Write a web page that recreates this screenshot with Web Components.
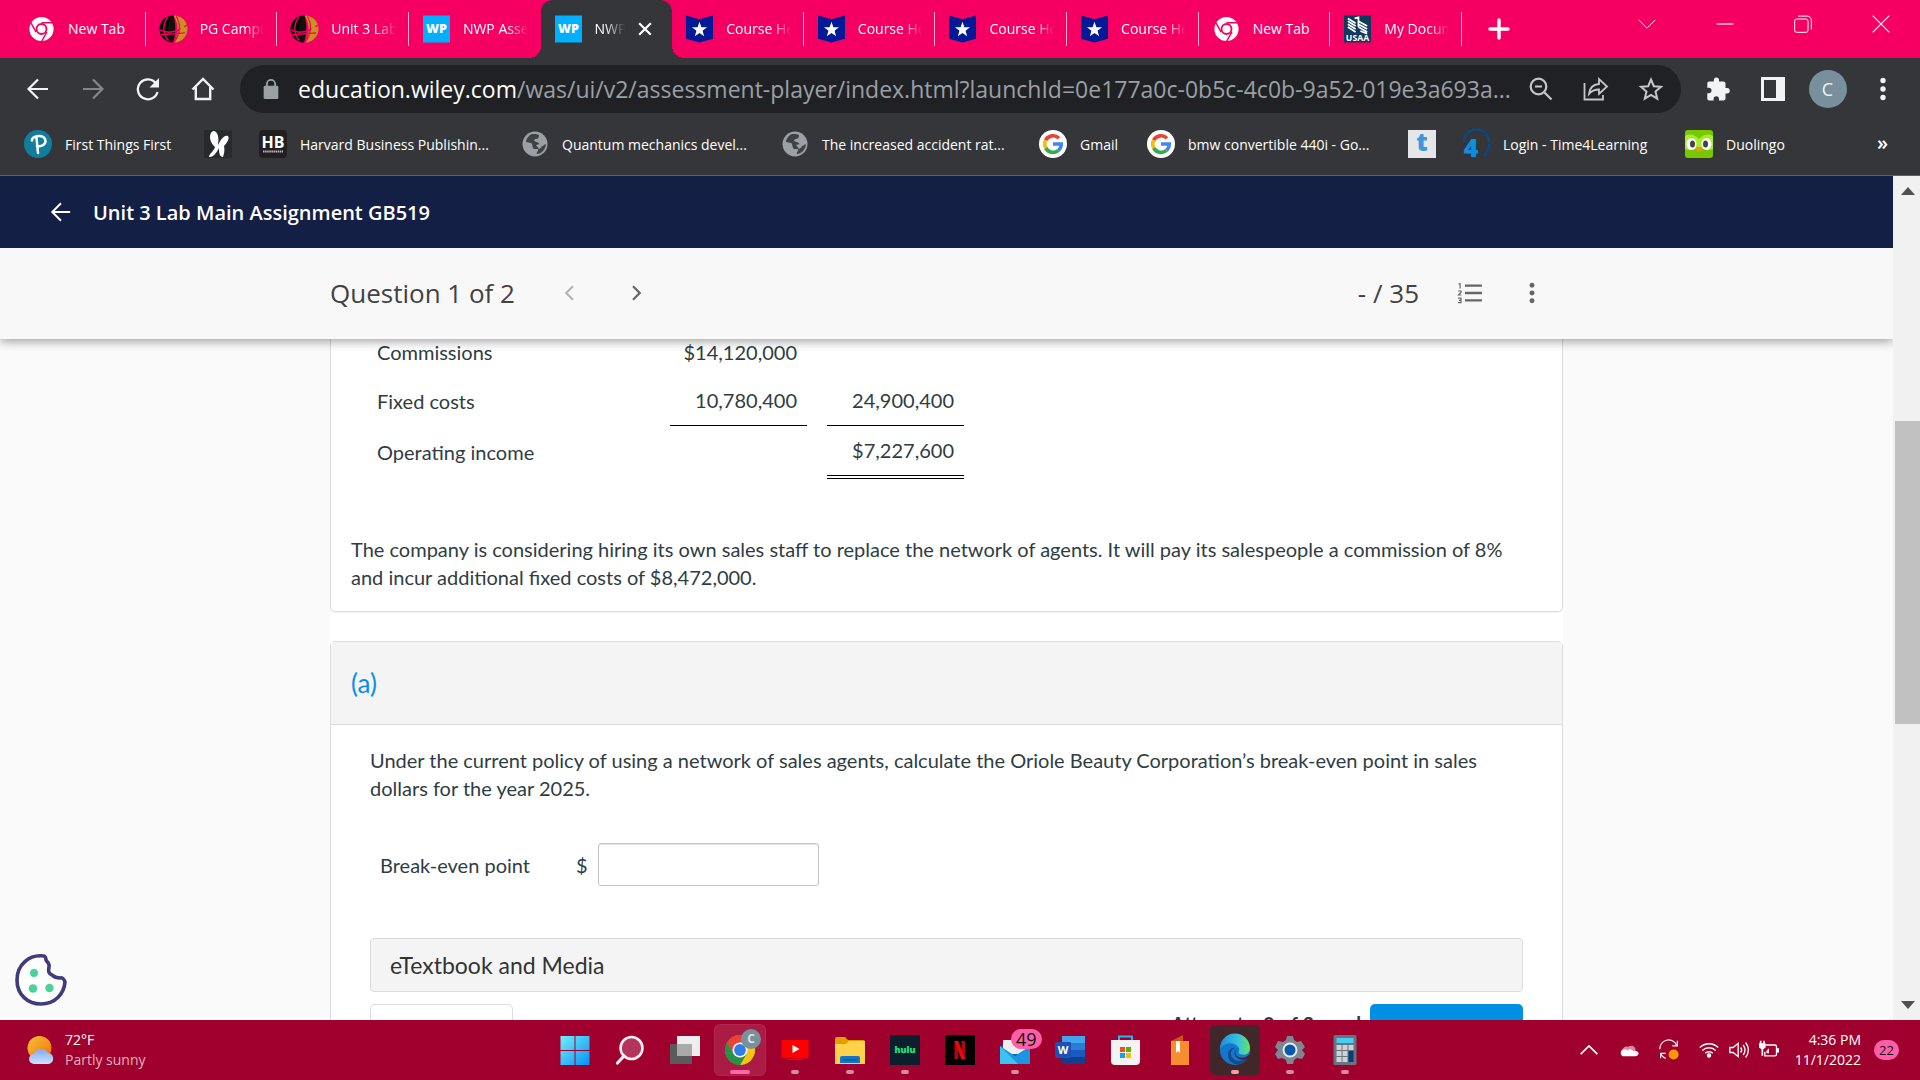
<!DOCTYPE html>
<html lang="en">
<head>
<meta charset="utf-8">
<title>Unit 3 Lab Main Assignment GB519</title>
<style>
  body {
    margin: 0;
    height: 100vh;
    display: flex;
    flex-direction: column;
    overflow: hidden;
    background: #fafafa;
    font-family: "Open Sans", "Noto Sans", sans-serif;
  }
</style>
</head>
<body>
<tab-strip>
  <browser-tab icon="chromeMono">New Tab</browser-tab>
  <browser-tab icon="globeGold">PG Campus</browser-tab>
  <browser-tab icon="globeGold">Unit 3 Lab</browser-tab>
  <browser-tab icon="wp">NWP Assess</browser-tab>
  <browser-tab icon="wp" active>NWP</browser-tab>
  <browser-tab icon="shield">Course Hero</browser-tab>
  <browser-tab icon="shield">Course Hero</browser-tab>
  <browser-tab icon="shield">Course Hero</browser-tab>
  <browser-tab icon="shield">Course Hero</browser-tab>
  <browser-tab icon="chromeMono">New Tab</browser-tab>
  <browser-tab icon="usaa">My Docum</browser-tab>
</tab-strip>
<address-bar></address-bar>
<bookmarks-bar>
  <bookmark-link icon="pearson">First Things First</bookmark-link>
  <bookmark-link icon="butterfly"></bookmark-link>
  <bookmark-link icon="hb">Harvard Business Publishin...</bookmark-link>
  <bookmark-link icon="globe">Quantum mechanics devel...</bookmark-link>
  <bookmark-link icon="globe">The increased accident rat...</bookmark-link>
  <bookmark-link icon="google">Gmail</bookmark-link>
  <bookmark-link icon="google">bmw convertible 440i - Go...</bookmark-link>
  <bookmark-link icon="tLogo"></bookmark-link>
  <bookmark-link icon="four">Login - Time4Learning</bookmark-link>
  <bookmark-link icon="duo">Duolingo</bookmark-link>
</bookmarks-bar>
<page-view>
  <assignment-title slot="top">Unit 3 Lab Main Assignment GB519</assignment-title>
  <question-nav slot="top">Question 1 of 2</question-nav>
  <question-card>
    <income-table></income-table>
    The company is considering hiring its own sales staff to replace the network of agents. It will pay its salespeople a commission of 8% and incur additional fixed costs of $8,472,000.
  </question-card>
  <part-card heading="(a)">
    <span slot="prompt">Under the current policy of using a network of sales agents, calculate the Oriole Beauty Corporation’s break-even point in sales dollars for the year 2025.</span>
    <money-field label="Break-even point"></money-field>
  </part-card>
  <cookie-button slot="overlay"></cookie-button>
</page-view>
<task-bar></task-bar>

<script>
"use strict";

const ICONS = {
  back: `<svg viewBox="0 0 24 24" fill="none" stroke="currentColor" stroke-width="2.200"><path d="M22 12H3M12 2.500L2.500 12L12 21.500"/></svg>`,
  forward: `<svg viewBox="0 0 24 24" fill="none" stroke="currentColor" stroke-width="2.200"><path d="M2 12h19M12 2.500L21.500 12L12 21.500"/></svg>`,
  reload: `<svg viewBox="0 0 24 24"><path d="M20 6.500A10 10 0 1 0 21.500 15" fill="none" stroke="currentColor" stroke-width="2.300"/><path d="M23 1v9.500h-9.500z" fill="currentColor"/></svg>`,
  home: `<svg viewBox="0 0 24 24" fill="none" stroke="currentColor" stroke-width="2.400"><path d="M1.500 12.500L12 2l10.500 10.500M4.800 10v12h14.400V10"/></svg>`,
  lock: `<svg viewBox="0 0 24 24"><path d="M7.500 9V6.500a4.500 4.500 0 0 1 9 0V9" fill="none" stroke="currentColor" stroke-width="2"/><rect x="4" y="8.500" width="16" height="14.500" rx="1.500" fill="currentColor"/></svg>`,
  zoomOut: `<svg viewBox="0 0 24 24" fill="none" stroke="currentColor" stroke-width="2.200"><circle cx="9.500" cy="9.500" r="7.800"/><path d="M15.500 15.500L22.500 22.500M6 9.500h7"/></svg>`,
  share: `<svg viewBox="0 0 24 24" fill="none" stroke="currentColor" stroke-width="1.800"><path d="M.5 6v16.500H19V18"/><path d="M5 17c.5-6 4-9.500 10-10V2l8 7.500-8 7.500V12.500c-4 0-7.500 1.500-10 4.500z"/></svg>`,
  star: `<svg viewBox="0 0 24 24" fill="none" stroke="currentColor" stroke-width="2"><path d="M12 2.500l2.800 6.700 7.200.6-5.500 4.700 1.700 7.100-6.200-3.800-6.200 3.800 1.700-7.100L2 9.800l7.200-.6z"/></svg>`,
  puzzle: `<svg viewBox="0 0 24 24" fill="currentColor"><path d="M21 11H19.500V6.500c0-1.100-.9-2-2-2h-4.500V3a2.600 2.600 0 0 0-5.200 0v1.500H3.300c-1.100 0-2 .9-2 2v4.300h1.500a2.700 2.700 0 0 1 0 5.400H1.300V21.500c0 1.100.9 2 2 2h4.300V22a2.700 2.700 0 0 1 5.400 0v1.500h4.500c1.100 0 2-.9 2-2v-5H21a2.700 2.700 0 0 0 0-5.500z"/></svg>`,
  sidePanel: `<svg viewBox="0 0 24 24"><path fill="currentColor" fill-rule="evenodd" d="M0 0h24v24H0zM3 3v18h12V3z"/></svg>`,
  dots: `<svg viewBox="0 0 24 24" fill="currentColor"><circle cx="12" cy="3.500" r="2.700"/><circle cx="12" cy="12" r="2.700"/><circle cx="12" cy="20.500" r="2.700"/></svg>`,
  close: `<svg viewBox="0 0 24 24" fill="none" stroke="currentColor" stroke-width="3.800"><path d="M2 2l20 20M22 2L2 22"/></svg>`,
  plus: `<svg viewBox="0 0 24 24" fill="none" stroke="currentColor" stroke-width="3.400" stroke-linecap="round"><path d="M12 3v18M3 12h18"/></svg>`,
  down: `<svg viewBox="0 0 24 24" fill="none" stroke="currentColor" stroke-width="1.200"><path d="M2 7l10 10L22 7"/></svg>`,
  up: `<svg viewBox="0 0 24 24" fill="none" stroke="currentColor" stroke-width="2"><path d="M2 17L12 7l10 10"/></svg>`,
  minimise: `<svg viewBox="0 0 24 24" fill="none" stroke="currentColor" stroke-width="1.400"><path d="M2 12h20"/></svg>`,
  restore: `<svg viewBox="0 0 24 24" fill="none" stroke="currentColor" stroke-width="1.200"><rect x="2" y="6" width="16" height="16" rx="2.500"/><path d="M6 2.500h11a5 5 0 0 1 5 5v11"/></svg>`,
  winClose: `<svg viewBox="0 0 24 24" fill="none" stroke="currentColor" stroke-width="1.300"><path d="M2 2l20 20M22 2L2 22"/></svg>`,
  chromeMono: `<svg viewBox="0 0 24 24" fill="none" stroke="#fff"><circle cx="12" cy="12" r="8" stroke-width="5.500"/><circle cx="12" cy="12" r="3.600" fill="#fff" stroke="none"/><g stroke="#f50062" stroke-width="1.300"><path d="M12 6.500h10.500M16.800 14.700L11.500 24M7.200 14.700L2 5.500"/></g></svg>`,
  globeGold: `<svg viewBox="0 0 28 28"><path d="M14 0a14 14 0 0 0-1 28C7 20 8 8 14 0z" fill="#050505"/><path d="M14 0a14 14 0 0 1 1 28c4-9 5-19-1-28z" fill="#c8921e"/><path d="M13 0c-6 9-7 19-1 28l2-1c2-9 3-17 0-27z" fill="#15100a"/><path d="M0 15c9 5 18 2 28-5M17 1c5 8 4 18-2 26M8 2c-6 8-5 18 1 24M1 20l25-2" fill="none" stroke="#f50062" stroke-width="1.400"/><path d="M18 2c6 4 8 9 8 14l-5 2c1-6 0-11-3-16z" fill="#c8921e"/></svg>`,
  wp: `<svg viewBox="0 0 28 28"><path fill="#00b0ff" d="M0 0h28v28H0z"/><text x="14" y="18.500" text-anchor="middle" font-size="13" font-weight="800" fill="#fff" font-family="Open Sans">WP</text></svg>`,
  shield: `<svg viewBox="0 0 28 28"><path fill="#031a96" d="M0 0l14 4L28 0v24l-14 4L0 24z"/><path fill="#fff" d="M14 6.500l2 5.600 5.800.1-4.600 3.600 1.600 5.700-4.800-3.400-4.800 3.400 1.600-5.700-4.600-3.600 5.800-.1z"/></svg>`,
  usaa: `<svg viewBox="0 0 28 28"><path fill="#12395b" d="M0 0h28v28H0z"/><path d="M4 3l8 5M4 6l8 5M4 9l8 5M4 12l8 5M11 3l4-1v10M15 6l9 5M15 9l9 5M15 12l9 5M17 16l7 3" fill="none" stroke="#fff" stroke-width="1.800"/><text x="14" y="26.500" text-anchor="middle" font-size="9" font-weight="700" fill="#fff" font-family="Open Sans">USAA</text></svg>`,
  pearson: `<svg viewBox="0 0 28 28"><circle cx="14" cy="14" r="14" fill="#127e9e"/><path d="M8 10.500c-1-4 10-7 13-1.500 2 5-3 8-8 7M12.500 8l1.500 15" fill="none" stroke="#fff" stroke-width="2.500" stroke-linecap="round"/></svg>`,
  butterfly: `<svg viewBox="0 0 28 28"><path fill="#282b2e" d="M0 0h28v28H0z"/><path fill="#fff" d="M7 3c3-4 6-1 7 3 1 5 0 7 0 9 2-4 6-11 10-9 2 2-1 7-4 10 1 4 0 8-1 11-4 0-4-6-4-9-2 4-6 10-10 9 0-3 5-6 6-10C6 13 5 6 7 3z"/></svg>`,
  hb: `<svg viewBox="0 0 28 28"><rect width="28" height="28" rx="4" fill="#231f20"/><text x="14" y="17.500" text-anchor="middle" font-size="16" font-weight="700" fill="#fff" font-family="Open Sans">HB</text><path d="M4 21.500h20" stroke="#bbb" stroke-width="2" stroke-dasharray="1.500 .6"/></svg>`,
  globe: `<svg viewBox="0 0 28 28"><circle cx="14" cy="14" r="12.500" fill="#9aa0a6"/><path fill="#35363a" d="M15 4l3 1c0 3-1 4-4 4l-1 2c2 1 5 1 6 4 1 2 4 1 5-1l1 1c-1 5-5 9-9 9-1-2 2-3 1-5h-4c-2-1-1-5-3-6l-5-1c0-3 3-7 6-8z" opacity=".9"/><path fill="#9aa0a6" d="M15 15l4-1 2 3-3 2z"/></svg>`,
  google: `<svg viewBox="0 0 28 28"><circle cx="14" cy="14" r="14" fill="#fff"/><g fill="none" stroke-width="3.600"><path d="M6.600 10.300A8.400 8.400 0 0 1 20 8.200" stroke="#ea4335"/><path d="M6.700 18a8.400 8.400 0 0 1-.1-7.700" stroke="#fbbc05"/><path d="M19.500 20.300A8.400 8.400 0 0 1 6.700 18" stroke="#34a853"/><path d="M14 14h8.300a8.400 8.400 0 0 1-2.800 6.300" stroke="#4285f4"/></g></svg>`,
  tLogo: `<svg viewBox="0 0 28 28"><path fill="#e4e6e8" d="M0 0h28v28H0z"/><text x="14" y="21" text-anchor="middle" font-size="25" font-weight="800" fill="#3d97d8" font-family="Open Sans">t</text></svg>`,
  four: `<svg viewBox="0 0 28 28"><path d="M2 12A12 12 0 0 1 27 12q1 8-5 14" fill="none" stroke="#064a86" stroke-width="2.600" stroke-dasharray="9 1"/><text x="9" y="27" text-anchor="middle" font-size="25" font-weight="800" fill="#0c8fe0" font-family="Open Sans">4</text></svg>`,
  duo: `<svg viewBox="0 0 28 28"><rect width="28" height="28" rx="3" fill="#78c800"/><path d="M0 6q7-4 14 3 7-7 14-3v13q-7 3-14-2-7 5-14 2z" fill="#a5ed2e"/><ellipse cx="6.500" cy="14" rx="5" ry="6" fill="#fff"/><ellipse cx="21.500" cy="14" rx="5" ry="6" fill="#fff"/><ellipse cx="7.500" cy="14" rx="2.500" ry="3.500" fill="#444"/><ellipse cx="20.500" cy="14" rx="2.500" ry="3.500" fill="#444"/><path d="M11 17h6l-1 4q-2 2-4 0z" fill="#f7941d"/></svg>`,
  prev: `<svg viewBox="0 0 24 24" fill="none" stroke="currentColor" stroke-width="3"><path d="M16 3l-9 9 9 9"/></svg>`,
  next: `<svg viewBox="0 0 24 24" fill="none" stroke="currentColor" stroke-width="3"><path d="M8 3l9 9-9 9"/></svg>`,
  list: `<svg viewBox="0 0 28 24" fill="none" stroke="currentColor"><path stroke-width="2.600" d="M8.500 4H27M8.500 12H27M8.500 20H27"/><path stroke-width="1.300" d="M1.500 2h1.700v5M1 9.800h3.300v1.300L1.500 14.200h3M1 17.600h3.200v5H1M2 20h2"/></svg>`,
  triUp: `<svg viewBox="0 0 14 8"><path fill="#505050" d="M7 0l7 8H0z"/></svg>`,
  triDown: `<svg viewBox="0 0 14 8"><path fill="#505050" d="M7 8l7-8H0z"/></svg>`,
  cookie: `<svg viewBox="0 0 52 52"><path d="M29 2C14 0 2 11 2 26s11 24 24 24c14 0 23-10 24-22-1-3-3-5-5-4-4 0-6-1-8-3-3-1-4-4-3-8 1-4-2-5-3-7 0-2-1-4-2-4z" fill="#fff" stroke="#3f3b7d" stroke-width="3.600" stroke-linejoin="round"/><g fill="#49d39b"><circle cx="19" cy="19" r="4"/><circle cx="18" cy="34.500" r="4.300"/><circle cx="34.500" cy="34" r="4.200"/></g></svg>`,
  weather: `<svg viewBox="0 0 30 30"><defs><linearGradient id="s" x1="0" y1="0" x2="1" y2="1"><stop stop-color="#f4c430"/><stop offset="1" stop-color="#f26b12"/></linearGradient><linearGradient id="c" x1="0" y1="0" x2="0" y2="1"><stop stop-color="#7eaaf0"/><stop offset="1" stop-color="#cfe2fb"/></linearGradient></defs><circle cx="13.500" cy="13" r="12" fill="url(#s)"/><path d="M8 29a5 5 0 0 1 0-10 7.500 7 0 0 1 14-1 5.600 5.600 0 0 1 1 11z" fill="url(#c)"/></svg>`,
  windows: `<svg viewBox="0 0 30 30"><defs><linearGradient id="w" x1="0" y1="0" x2="1" y2="1"><stop stop-color="#74eefb"/><stop offset="1" stop-color="#0791f5"/></linearGradient></defs><path fill="url(#w)" d="M.5 1h14v14h-14zM15.500 1h14v14h-14zM.5 16h14v14h-14zM15.500 16h14v14h-14z"/></svg>`,
  search: `<svg viewBox="0 0 30 30"><circle cx="16.500" cy="13" r="11" fill="#b5355a" stroke="#eee" stroke-width="2.600"/><path d="M9 21l-6.500 7" stroke="#eee" stroke-width="3.200" stroke-linecap="round"/></svg>`,
  taskView: `<svg viewBox="0 0 30 30"><path fill="#5b5b5b" d="M0 9h22v20H0z"/><path fill="#eee" d="M7 1h23v20H7z"/><path fill="#aaa" d="M7 9h15v12H7z"/></svg>`,
  chrome: `<svg viewBox="0 0 30 30"><circle cx="15" cy="15" r="15" fill="#34a853"/><path fill="#ea4335" d="M2 7.500a15 15 0 0 1 26 0H15l-6.500 11z"/><path fill="#fbc116" d="M28 7.500A15 15 0 0 1 15 30l6.500-11.200L15 7.500z"/><path fill="#2a9247" d="M2 7.500A15 15 0 0 0 15 30l6.500-11H8.500z"/><circle cx="15" cy="15" r="7.500" fill="#fff"/><circle cx="15" cy="15" r="5.900" fill="#2f7de9"/></svg>`,
  youtube: `<svg viewBox="0 0 30 30"><rect x="1.500" y="5" width="27" height="18" rx="1" fill="#f00"/><path fill="#f00" d="M7 23.500h16V25H7z"/><path fill="#fff" d="M12.500 10l7 4-7 4z"/></svg>`,
  folder: `<svg viewBox="0 0 30 30"><path fill="#e0a000" d="M0 4q0-2 2-2h8l3 3h15q2 0 2 2v5H0z"/><path fill="#ffd24a" d="M0 9h11l3-3h16v23H0z"/><path fill="#1275c6" d="M5 28v-5q0-2 2-2h16q2 0 2 2v5z"/><path d="M8 25h14" stroke="#07508f"/></svg>`,
  hulu: `<svg viewBox="0 0 30 30"><path fill="#0b1f2c" d="M0 0h30v30H0z"/><text x="15" y="18" text-anchor="middle" font-size="9" font-weight="800" fill="#1ce783" font-family="Open Sans">hulu</text></svg>`,
  netflix: `<svg viewBox="0 0 30 30"><path d="M0 0h30v30H0z"/><path fill="#b1060f" d="M9.500 6h3.700v18l-3.700.5zM16.500 6h3.700v18.500l-3.700-.5z"/><path fill="#e50914" d="M9.500 6h3.700l7 18.500-3.900-.5z"/></svg>`,
  mail: `<svg viewBox="0 0 30 30"><path fill="#0a5fb0" d="M0 12L15 2l15 10v17H0z"/><path fill="#eee" d="M3 5h24v14H3z"/><path fill="#1b95e0" d="M0 11l15 10L30 11v18H0z"/><path fill="#3cc3f2" d="M0 11l18 18H0z"/></svg>`,
  word: `<svg viewBox="0 0 30 30"><path fill="#41a5ee" d="M7 1h23v8H7z"/><path fill="#2b7cd3" d="M7 8h23v8H7z"/><path fill="#185abd" d="M7 15h23v8H7z"/><path fill="#103f91" d="M7 22h23v7H7z"/><rect y="7" width="16" height="16" rx="1" fill="#1c52b5"/><text x="8" y="19" text-anchor="middle" font-size="11" font-weight="700" fill="#fff" font-family="Open Sans">W</text></svg>`,
  store: `<svg viewBox="0 0 30 30"><path d="M9 6V1.500h13V6" fill="none" stroke="#28b5f0" stroke-width="2"/><path fill="#f3f3f3" d="M1 5h29v21q0 4-4 4H5q-4 0-4-4z"/><path fill="#f25022" d="M10 12h5v5h-5z"/><path fill="#59b300" d="M16 12h5v5h-5z"/><path fill="#08a4ef" d="M10 18h5v5h-5z"/><path fill="#ffb900" d="M16 18h5v5h-5z"/></svg>`,
  book: `<svg viewBox="0 0 30 30"><path fill="#d4500f" d="M6 6l12-6v6z"/><path fill="#f68d2e" d="M6 6h18v24H6z"/><path fill="#fff" d="M11 6h4v12l-2-2-2 2z"/></svg>`,
  edge: `<svg viewBox="0 0 30 30"><defs><linearGradient id="e" x1="0" y1="0" x2="1" y2="0"><stop stop-color="#1c8fdd"/><stop offset=".6" stop-color="#35c1e0"/><stop offset="1" stop-color="#68e35a"/></linearGradient></defs><circle cx="15" cy="15" r="15" fill="#1477cf"/><path fill="url(#e)" d="M0 14A15 15 0 0 1 30 13c0 6-5 8-10 6-3-1 0-2-1-6C15 6 4 7 0 14z"/><path fill="#114a92" d="M15 13c-6 2-5 9 0 12 5 2 9 0 13-2-7 10-21 7-20-4 1-5 4-7 7-6z"/><path fill="#42272a" d="M17 14c-3 1-2 6 1 8 5 2 9 0 12-3v2l-3 3c-5 2-10 0-12-4-1-3 0-6 2-6z"/></svg>`,
  gear: `<svg viewBox="0 0 30 30"><path fill="#7d8790" d="M12 1h6l1 4 3 2 4-1 4 6-3 3 3 4-3 5-5-1-3 2-1 4h-6l-1-4-4-2-4 1-3-5 3-4-3-3 3-6 5 1 3-2z"/><circle cx="15" cy="15" r="7.500" fill="#e7eaec"/><circle cx="15" cy="15" r="5.500" fill="#075aa8"/></svg>`,
  calc: `<svg viewBox="0 0 30 30"><rect x="3.500" y="0" width="23" height="30" rx="1.500" fill="#69757e"/><path fill="#46cff3" d="M6.500 3h17v5h-17z"/><path fill="#ccd2d8" d="M6.500 10h5v5h-5zM12.500 10h5v5h-5zM18.500 10h5v5h-5zM6.500 16h5v5h-5zM12.500 16h5v5h-5zM6.500 22h5v5h-5zM12.500 22h5v5h-5z"/><path fill="#0a3c79" d="M18.500 16h5v11h-5z"/></svg>`,
  cloud: `<svg viewBox="0 0 24 24"><path fill="#d98ba3" d="M4 12a6 6 0 0 1 7-4c5-3 9 0 9 5L12 18z"/><path fill="#fff" d="M4.500 19.500a4.500 4.500 0 0 1 0-8q3-1 6 1 3-3 7 1 6-1 6 3-1 3-4 3z"/></svg>`,
  sync: `<svg viewBox="0 0 24 24"><g fill="none" stroke="#fff" stroke-width="1.400"><path d="M1 11A10.500 10.500 0 0 1 21 6M22 1v6h-6M8 22a10 10 0 0 1-6-6M2 22v-6h6"/></g><circle cx="17.500" cy="17.500" r="6" fill="#ff9800"/></svg>`,
  wifi: `<svg viewBox="0 0 24 24" fill="none" stroke="#fff" stroke-width="1.700"><path d="M1 9a15.500 15.500 0 0 1 22 0M4 12.500a11.500 11.500 0 0 1 16 0M7.500 16a6.500 6.500 0 0 1 9 0"/><circle cx="12" cy="18.500" r="1.800" fill="#fff"/></svg>`,
  volume: `<svg viewBox="0 0 24 24" fill="none" stroke="#fff" stroke-width="1.600"><path d="M1 9h4l6-5v16l-6-5H1zM14 9q2.500 3 0 6M17 6q4.500 6 0 12M20 3q6.500 9 0 18"/></svg>`,
  battery: `<svg viewBox="0 0 24 24"><path d="M8 6h11a2 2 0 0 1 2 2v9a2 2 0 0 1-2 2H7v-5" fill="none" stroke="#fff" stroke-width="1.600"/><path fill="#fff" d="M21.500 10H24v5h-2.500zM9 13l3-3v6H9zM0 4h8v5l-3 2v8H3v-8L0 9zM1 1h2v4H1zM5 1h2v4H5z"/></svg>`
};

// Shared by every element: opens a shadow root and fills it from a template.
function render(host, html) {
  const template = document.createElement("template");
  template.innerHTML = html;
  host.attachShadow({mode: "open"}).appendChild(template.content.cloneNode(true));
}

const BUTTON = `
  button {
    display: flex;
    align-items: center;
    justify-content: center;
    padding: 0;
    border: 0;
    background: none;
    color: inherit;
    font: inherit;
  }
`;

customElements.define("ui-icon", class extends HTMLElement {
  constructor() {
    super();
    render(this, `
      <style>
        :host { display: block; flex: none; width: 24px; height: 24px; }
        svg { display: block; width: 100%; height: 100%; overflow: visible; }
      </style>
    `);
  }
  connectedCallback() {
    if (this.shadowRoot.querySelector("svg")) return;
    this.shadowRoot.innerHTML += ICONS[this.getAttribute("name")];
    this.setAttribute("aria-hidden", "true");
  }
});

customElements.define("tab-strip", class extends HTMLElement {
  constructor() {
    super();
    render(this, `
      <style>
        :host { display: flex; flex: none; height: 58px; padding-left: 14px; background: #f50062; color: #fff; }
        .tabs { flex: 0 1 1448px; min-width: 0; display: grid; grid-template-columns: repeat(11, minmax(0, 1fr)); }
        ${BUTTON}
        .new { width: 74px; height: 58px; }
        .window { display: flex; height: 48px; margin-left: auto; }
        .window button { width: 78px; }
        .window ui-icon { width: 20px; height: 20px; }
      </style>
      <div class="tabs"><slot></slot></div>
      <button class="new" aria-label="New tab"><ui-icon name="plus"></ui-icon></button>
      <div class="window">
        <button aria-label="Search tabs"><ui-icon name="down"></ui-icon></button>
        <button aria-label="Minimise"><ui-icon name="minimise"></ui-icon></button>
        <button aria-label="Restore"><ui-icon name="restore"></ui-icon></button>
        <button aria-label="Close window"><ui-icon name="winClose"></ui-icon></button>
      </div>
    `);
  }
});

customElements.define("browser-tab", class extends HTMLElement {
  constructor() {
    super();
    const active = this.hasAttribute("active");
    render(this, `
      <style>
        :host { display: flex; align-items: center; position: relative; gap: 13px; padding: 0 13px 0 14px; font-size: 14px; }
        :host::after { content: ""; position: absolute; right: 0; width: 1px; height: 34px; background: #ffb3d0; }
        :host(:nth-child(4))::after { display: none; }
        :host([active]) { padding-right: 20px; background: #35363a; border-radius: 12px 12px 0 0; }
        :host([active])::before, :host([active])::after {
          content: ""; position: absolute; bottom: 0; width: 12px; height: 12px;
          background: radial-gradient(circle at 0 0, transparent 12px, #35363a 12px);
        }
        :host([active])::before { right: 100%; }
        :host([active])::after { right: auto; left: 100%; background: radial-gradient(circle at 100% 0, transparent 12px, #35363a 12px); }
        ui-icon { width: 27px; height: 28px; }
        .label {
          flex: 1; min-width: 0; padding-bottom: 2px; overflow: hidden; white-space: nowrap;
          -webkit-mask-image: linear-gradient(90deg, #000 calc(100% - 20px), transparent);
          mask-image: linear-gradient(90deg, #000 calc(100% - 20px), transparent);
        }
        :host([icon="chromeMono"]) .label { -webkit-mask-image: none; mask-image: none; }
        ${BUTTON}
        button ui-icon { width: 14px; height: 14px; }
      </style>
      <ui-icon name="${this.getAttribute("icon")}"></ui-icon>
      <span class="label"><slot></slot></span>
      ${active ? `<button aria-label="Close tab"><ui-icon name="close"></ui-icon></button>` : ""}
    `);
  }
});

customElements.define("address-bar", class extends HTMLElement {
  constructor() {
    super();
    render(this, `
      <style>
        :host { display: flex; flex: none; align-items: center; height: 62px; padding: 0 10px; background: #35363a; color: #f1f3f4; }
        ${BUTTON}
        button { width: 55px; height: 48px; flex: none; }
        .off { color: #85868a; }
        .url {
          flex: 1; min-width: 0; display: flex; align-items: center; height: 48px; margin: 0 9px 0 10px; padding: 0 3px 0 20px;
          box-sizing: border-box; border-radius: 24px; background: #202124; color: #9aa0a6; font-size: 23px;
        }
        .url ui-icon { width: 22px; height: 22px; }
        .url button { color: #c4c7c9; }
        .url button ui-icon { width: 24px; height: 24px; }
        .text { flex: 1; min-width: 0; margin-left: 16px; overflow: hidden; white-space: nowrap; }
        b { font-weight: 400; color: #fff; }
        .avatar { width: 38px; height: 38px; border-radius: 50%; background: #78909c; font-size: 18px; display: flex; align-items: center; justify-content: center; }
      </style>
      <button aria-label="Back"><ui-icon name="back"></ui-icon></button>
      <button class="off" aria-label="Forward"><ui-icon name="forward"></ui-icon></button>
      <button aria-label="Reload"><ui-icon name="reload"></ui-icon></button>
      <button aria-label="Home"><ui-icon name="home"></ui-icon></button>
      <div class="url">
        <ui-icon name="lock"></ui-icon>
        <span class="text"><b>education.wiley.com</b>/was/ui/v2/assessment-player/index.html?launchId=0e177a0c-0b5c-4c0b-9a52-019e3a693a...</span>
        <button aria-label="Zoom"><ui-icon name="zoomOut"></ui-icon></button>
        <button aria-label="Share"><ui-icon name="share"></ui-icon></button>
        <button aria-label="Bookmark"><ui-icon name="star"></ui-icon></button>
      </div>
      <button aria-label="Extensions"><ui-icon name="puzzle"></ui-icon></button>
      <button aria-label="Side panel"><ui-icon name="sidePanel"></ui-icon></button>
      <button aria-label="Profile"><span class="avatar">C</span></button>
      <button aria-label="Menu"><ui-icon name="dots"></ui-icon></button>
    `);
  }
});

customElements.define("bookmarks-bar", class extends HTMLElement {
  constructor() {
    super();
    render(this, `
      <style>
        :host { display: flex; flex: none; align-items: flex-start; justify-content: space-between; height: 55px; padding: 0 32px 0 24px; border-bottom: 1px solid #5f6063; background: #35363a; color: #fff; }
        nav { display: grid; grid-template-columns: 180px 55px 262px 260px 258px 108px 261px 54px 223px 120px; height: 48px; }
        ${BUTTON}
        button { height: 44px; font-size: 20px; font-weight: 600; }
      </style>
      <nav><slot></slot></nav>
      <button aria-label="More bookmarks">»</button>
    `);
  }
});

customElements.define("bookmark-link", class extends HTMLElement {
  constructor() {
    super();
    render(this, `
      <style>
        :host { display: block; font-size: 14px; }
        a { display: flex; align-items: center; gap: 13px; height: 48px; color: inherit; text-decoration: none; white-space: nowrap; }
        ui-icon { width: 28px; height: 28px; }
      </style>
      <a href="#"><ui-icon name="${this.getAttribute("icon")}"></ui-icon><slot></slot></a>
    `);
  }
});

customElements.define("page-view", class extends HTMLElement {
  constructor() {
    super();
    render(this, `
      <style>
        :host { display: flex; flex: 1; min-height: 0; position: relative; }
        .page { flex: 1; min-width: 0; display: flex; flex-direction: column; }
        .scroll { flex: 1; min-height: 0; overflow: hidden; }
        main { max-width: 1233px; margin: 0 auto; background: #fff; }
        .bar { flex: none; width: 25px; padding-left: 2px; display: flex; flex-direction: column; align-items: stretch; background: #f1f1f1; }
        ${BUTTON}
        .bar button { height: 30px; }
        .bar ui-icon { width: 14px; height: 8px; }
        .before { flex: 215; }
        .thumb { flex: 303; background: #c1c1c1; }
        .after { flex: 266; }
      </style>
      <div class="page">
        <slot name="top"></slot>
        <div class="scroll"><main><slot></slot></main></div>
      </div>
      <div class="bar">
        <button aria-label="Scroll up"><ui-icon name="triUp"></ui-icon></button>
        <div class="before"></div><div class="thumb"></div><div class="after"></div>
        <button aria-label="Scroll down"><ui-icon name="triDown"></ui-icon></button>
      </div>
      <slot name="overlay"></slot>
    `);
  }
});

customElements.define("assignment-title", class extends HTMLElement {
  constructor() {
    super();
    render(this, `
      <style>
        :host { display: flex; flex: none; align-items: center; gap: 21px; height: 72px; padding-left: 50px; background: #141f45; color: #fff; }
        ${BUTTON}
        ui-icon { width: 22px; height: 22px; }
        h1 { margin: 0; font-size: 20px; font-weight: 600; }
      </style>
      <button aria-label="Back to course"><ui-icon name="back"></ui-icon></button>
      <h1><slot></slot></h1>
    `);
  }
});

customElements.define("question-nav", class extends HTMLElement {
  constructor() {
    super();
    render(this, `
      <style>
        :host { display: block; flex: none; position: relative; background: #f8f8f8; color: #424242; box-shadow: 0 2px 10px rgba(0, 0, 0, .4); clip-path: inset(0 0 -16px 0); }
        .row { display: flex; align-items: center; box-sizing: border-box; max-width: 1233px; height: 91px; margin: 0 auto; padding: 0 2px 2px 0; font-size: 26px; }
        h2 { margin: 0 22px 0 0; font: inherit; }
        ${BUTTON}
        button { width: 66px; height: 48px; color: #666; }
        button:disabled { color: #b5b5b5; }
        .arrow ui-icon { width: 18px; height: 18px; }
        .score { margin-left: auto; margin-right: 18px; }
        .list ui-icon { width: 26px; height: 22px; }
        .more { width: 58px; }
        .more ui-icon { width: 22px; height: 22px; }
      </style>
      <div class="row">
        <h2><slot></slot></h2>
        <button class="arrow" disabled aria-label="Previous question"><ui-icon name="prev"></ui-icon></button>
        <button class="arrow" aria-label="Next question"><ui-icon name="next"></ui-icon></button>
        <span class="score">- / 35</span>
        <button class="list" aria-label="Question list"><ui-icon name="list"></ui-icon></button>
        <button class="more" aria-label="More options"><ui-icon name="dots"></ui-icon></button>
      </div>
    `);
  }
});

customElements.define("question-card", class extends HTMLElement {
  constructor() {
    super();
    render(this, `
      <style>
        :host {
          display: block; margin-bottom: 29px; padding: 0 30px 20px 20px; border: 1px solid #dadcdd; border-top: 0;
          border-radius: 0 0 5px 5px; box-shadow: 0 1px 1px rgba(0, 0, 0, .05);
          color: #2f3d43; font: 20px/28px Lato, sans-serif;
        }
      </style>
      <slot></slot>
    `);
  }
});

customElements.define("income-table", class extends HTMLElement {
  constructor() {
    super();
    render(this, `
      <style>
        :host { display: block; margin-bottom: 56px; padding-left: 16px; }
        table { border-collapse: separate; border-spacing: 0; table-layout: fixed; width: 597px; }
        th, td { height: 28px; padding: 10px 10px 11px; font-weight: 400; text-align: right; }
        th { width: 263px; text-align: left; }
        td { width: 117px; }
        .gap { width: 20px; padding: 0; }
        tr:first-child > * { height: 26px; padding-top: 0; padding-bottom: 11px; line-height: 26px; }
        .single { border-bottom: 1px solid #000; }
        .double { border-bottom: 4px double #000; }
      </style>
      <table>
        <tr><th scope="row">Commissions</th><td class="gap"></td><td>$14,120,000</td><td class="gap"></td><td></td></tr>
        <tr><th scope="row">Fixed costs</th><td class="gap"></td><td class="single">10,780,400</td><td class="gap"></td><td class="single">24,900,400</td></tr>
        <tr><th scope="row">Operating income</th><td class="gap"></td><td></td><td class="gap"></td><td class="double">$7,227,600</td></tr>
      </table>
    `);
  }
});

customElements.define("part-card", class extends HTMLElement {
  constructor() {
    super();
    render(this, `
      <style>
        :host { display: block; border: 1px solid #dadcdd; border-radius: 5px 5px 0 0; color: #2f3d43; font: 20px/28px Lato, sans-serif; }
        h3 { margin: 0; padding: 0 20px; border-bottom: 1px solid #dadcdd; background: #f4f4f4; color: #0a8ee6; font-size: 26px; font-weight: 400; line-height: 82px; }
        .body { padding: 21px 39px; }
        p { margin: 0 0 41px; }
        ${BUTTON}
        .media {
          width: 100%; height: 54px; margin: 52px 0 12px; padding: 0 19px; justify-content: flex-start;
          border: 1px solid #dadcdd; border-radius: 4px; background: #f4f4f4; color: #333; font-size: 23px;
        }
        .actions { display: flex; align-items: flex-start; gap: 9px; }
        .actions button { height: 48px; border-radius: 5px; }
        .save { width: 143px; margin-right: auto; border: 1px solid #dadcdd; background: #fff; }
        .submit { width: 153px; background: #008fe3; }
        .attempts { padding-top: 6px; font-weight: 700; }
      </style>
      <h3>${this.getAttribute("heading")}</h3>
      <div class="body">
        <p><slot name="prompt"></slot></p>
        <slot></slot>
        <button class="media">eTextbook and Media</button>
        <div class="actions">
          <button class="save" aria-label="Save for later"></button>
          <span class="attempts">Attempts: 0 of 3 used</span>
          <button class="submit" aria-label="Submit answer"></button>
        </div>
      </div>
    `);
  }
});

customElements.define("money-field", class extends HTMLElement {
  constructor() {
    super();
    render(this, `
      <style>
        :host { display: flex; align-items: center; padding-left: 10px; }
        label { width: 196px; }
        input { box-sizing: border-box; width: 221px; height: 43px; margin: 0 0 0 10px; padding: 0 10px; border: 1px solid #c4c4c4; border-radius: 3px; background: #fff; font: inherit; box-shadow: inset 0 1px 1px rgba(0, 0, 0, .1); }
      </style>
      <label for="amount">${this.getAttribute("label")}</label>
      <span>$</span>
      <input id="amount" type="text">
    `);
  }
});

customElements.define("cookie-button", class extends HTMLElement {
  constructor() {
    super();
    render(this, `
      <style>
        :host { position: absolute; left: 15px; bottom: 14px; }
        ${BUTTON}
        ui-icon { width: 52px; height: 52px; }
      </style>
      <button aria-label="Cookie settings"><ui-icon name="cookie"></ui-icon></button>
    `);
  }
});

customElements.define("task-bar", class extends HTMLElement {
  constructor() {
    super();
    const apps = ["windows", "search", "taskView", "chrome", "youtube", "folder", "hulu", "netflix",
      "mail", "word", "store", "book", "edge", "gear", "calc"];
    const running = ["chrome", "youtube", "folder", "hulu", "mail", "edge", "gear", "calc"];
    render(this, `
      <style>
        :host { display: grid; flex: none; grid-template-columns: 1fr auto 1fr; align-items: center; height: 60px; background: #a0002d; color: #fff; font-size: 14px; line-height: 20px; }
        ${BUTTON}
        .weather { justify-self: start; gap: 9px; padding-left: 26px; text-align: left; }
        .weather ui-icon, .apps ui-icon { width: 30px; height: 30px; }
        .weather small { display: block; font-size: 14px; color: #e3b0be; }
        .apps { display: flex; gap: 5px; }
        .apps button { position: relative; width: 50px; height: 50px; border-radius: 5px; }
        .apps .chrome { background: #ab1c44; box-shadow: 0 0 0 1px #b0284e; }
        .apps .edge { background: #42272a; }
        .running::after { content: ""; position: absolute; bottom: 1px; width: 8px; height: 4px; border-radius: 2px; background: #d68ba3; }
        .chrome::after { width: 20px; background: #ff66ad; }
        .edge::after { background: #ff9aa5; }
        .apps i { position: absolute; font-style: normal; }
        .user { top: 4px; right: 4px; width: 20px; border-radius: 50%; background: #78909c; color: #dde4e8; font-size: 12px; font-weight: 700; }
        .count { top: 4px; left: 21px; padding: 0 5px; border-radius: 10px; background: #ff5fa8; color: #111; font-size: 18px; }
        .tray { display: flex; align-items: center; justify-self: end; padding-right: 21px; }
        .tray button { width: 40px; height: 40px; }
        .tray ui-icon { width: 20px; height: 20px; }
        .tray .quick { width: 100px; gap: 10px; }
        .tray .clock { width: 72px; margin-right: 13px; justify-content: flex-end; text-align: right; }
        .tray .notes { width: 25px; height: 20px; border-radius: 10px; background: #ff5fa8; color: #111; font-size: 13px; }
      </style>
      <button class="weather">
        <ui-icon name="weather"></ui-icon>
        <span>72°F<small>Partly sunny</small></span>
      </button>
      <div class="apps">
        ${apps.map((name) => `
          <button class="${name} ${running.includes(name) ? "running" : ""}" aria-label="${name}">
            <ui-icon name="${name}"></ui-icon>
            ${name === "chrome" ? `<i class="user">C</i>` : ""}
            ${name === "mail" ? `<i class="count">49</i>` : ""}
          </button>`).join("")}
      </div>
      <div class="tray">
        <button aria-label="Hidden icons"><ui-icon name="up"></ui-icon></button>
        <button aria-label="OneDrive"><ui-icon name="cloud"></ui-icon></button>
        <button aria-label="Update"><ui-icon name="sync"></ui-icon></button>
        <button class="quick" aria-label="Network, sound and battery">
          <ui-icon name="wifi"></ui-icon><ui-icon name="volume"></ui-icon><ui-icon name="battery"></ui-icon>
        </button>
        <button class="clock"><span>4:36 PM<br>11/1/2022</span></button>
        <button class="notes">22</button>
      </div>
    `);
  }
});
</script>
</body>
</html>
